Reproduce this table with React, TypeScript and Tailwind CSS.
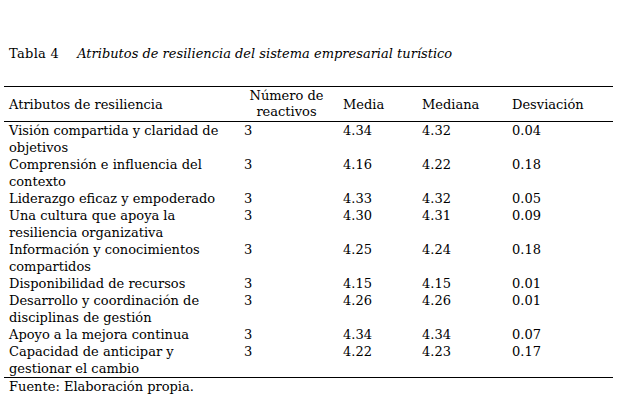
const rows = [
  { name: ['Visión compartida y claridad de', 'objetivos'], media: '4.34', mediana: '4.32', desv: '0.04' },
  { name: ['Comprensión e influencia del', 'contexto'], media: '4.16', mediana: '4.22', desv: '0.18' },
  { name: ['Liderazgo eficaz y empoderado'], media: '4.33', mediana: '4.32', desv: '0.05' },
  { name: ['Una cultura que apoya la', 'resiliencia organizativa'], media: '4.30', mediana: '4.31', desv: '0.09' },
  { name: ['Información y conocimientos', 'compartidos'], media: '4.25', mediana: '4.24', desv: '0.18' },
  { name: ['Disponibilidad de recursos'], media: '4.15', mediana: '4.15', desv: '0.01' },
  { name: ['Desarrollo y coordinación de', 'disciplinas de gestión'], media: '4.26', mediana: '4.26', desv: '0.01' },
  { name: ['Apoyo a la mejora continua'], media: '4.34', mediana: '4.34', desv: '0.07' },
  { name: ['Capacidad de anticipar y', 'gestionar el cambio'], media: '4.22', mediana: '4.23', desv: '0.17' },
]

const cols = 'grid grid-cols-[235px_99px_79px_90px_1fr]'

export default function App() {
  return (
    <div className="w-[618px] h-[400px] bg-white text-black font-['DejaVu_Serif',serif] text-[13px] leading-[17px] overflow-hidden">
      <div className="pt-[45px] pl-[9px] flex items-baseline">
        <span className="tracking-[0.3px]">Tabla 4</span>
        <span className="italic ml-[18px]">Atributos de resiliencia del sistema empresarial turístico</span>
      </div>

      <div className="mt-[24px] ml-[4px] w-[609px]">
        <div className="border-t border-black" />
        <div className={`${cols} pl-[5px] h-[34px] items-center`}>
          <div>Atributos de resiliencia</div>
          <div className="text-center pr-[14px] leading-[16px]">
            Número de<br />reactivos
          </div>
          <div>Media</div>
          <div>Mediana</div>
          <div>Desviación</div>
        </div>
        <div className="border-t border-black" />

        {rows.map((r, i) => (
          <div key={i} className={`${cols} pl-[5px]`}>
            <div>
              {r.name.map((n, j) => (
                <div key={j}>{n}</div>
              ))}
            </div>
            <div>3</div>
            <div>{r.media}</div>
            <div>{r.mediana}</div>
            <div>{r.desv}</div>
          </div>
        ))}
        <div className="border-t border-black" />
        <div className="pl-[5px]">Fuente: Elaboración propia.</div>
      </div>
    </div>
  )
}
